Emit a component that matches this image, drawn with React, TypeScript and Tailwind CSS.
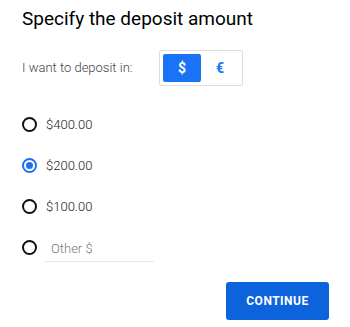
import { useState } from "react";

const amounts = ["400.00", "200.00", "100.00"];

function Radio(props: { checked: boolean; onClick: () => void }) {
  return (
    <button
      type="button"
      onClick={props.onClick}
      className={
        props.checked
          ? "w-[15px] h-[15px] rounded-full border-2 border-[#1a73f5] flex items-center justify-center shrink-0"
          : "w-[15px] h-[15px] rounded-full border-2 border-[#111] flex items-center justify-center shrink-0"
      }
    >
      {props.checked && <span className="w-[7px] h-[7px] rounded-full bg-[#1a73f5]" />}
    </button>
  );
}

export default function App() {
  const [currency, setCurrency] = useState("usd");
  const [amount, setAmount] = useState("200.00");
  const [other, setOther] = useState("");

  return (
    <div
      className="w-[350px] h-[327px] bg-white pl-[22px] pr-[21px] pt-[6px]"
      style={{ fontFamily: "Roboto, 'Liberation Sans', sans-serif" }}
    >
      <h1 className="text-[19px] font-normal text-black leading-[25px]">
        Specify the deposit amount
      </h1>

      <div className="flex items-center mt-[19px]">
        <span className="text-[13px] font-light text-[#444] w-[137px]">I want to deposit in:</span>
        <div className="flex border border-[#ddd] rounded-[2px] p-[3px]">
          <button
            type="button"
            onClick={() => setCurrency("usd")}
            className={
              currency === "usd"
                ? "w-[38px] h-[28px] rounded-[2px] bg-[#1a73f5] text-white text-[14px] font-bold"
                : "w-[38px] h-[28px] rounded-[2px] text-[#1a73f5] text-[14px] font-bold"
            }
          >
            $
          </button>
          <button
            type="button"
            onClick={() => setCurrency("eur")}
            className={
              currency === "eur"
                ? "w-[38px] h-[28px] rounded-[2px] bg-[#1a73f5] text-white text-[14px] font-bold"
                : "w-[38px] h-[28px] rounded-[2px] text-[#1a73f5] text-[14px] font-bold"
            }
          >
            €
          </button>
        </div>
      </div>

      <div className="flex flex-col mt-[31px] gap-[26px]">
        {amounts.map((a) => (
          <label key={a} className="flex items-center gap-[9px] h-[15px] cursor-pointer">
            <Radio checked={amount === a} onClick={() => setAmount(a)} />
            <span className="text-[13px] font-light text-[#222]">${a}</span>
          </label>
        ))}
        <div className="flex items-center gap-[8px] h-[15px]">
          <Radio checked={amount === "other"} onClick={() => setAmount("other")} />
          <input
            value={other}
            onChange={(e) => setOther(e.target.value)}
            onFocus={() => setAmount("other")}
            placeholder="Other $"
            className="w-[109px] h-[26px] mt-[2px] px-[6px] text-[13px] font-light text-[#333] border-b border-[#e6e6e6] placeholder:text-[#777] focus:outline-none"
          />
        </div>
      </div>

      <div className="flex justify-end mt-[27px]">
        <button
          type="button"
          className="w-[103px] h-[38px] rounded-[3px] bg-[#0d63dc] text-white text-[12px] font-bold tracking-[0.5px]"
        >
          CONTINUE
        </button>
      </div>
    </div>
  );
}
